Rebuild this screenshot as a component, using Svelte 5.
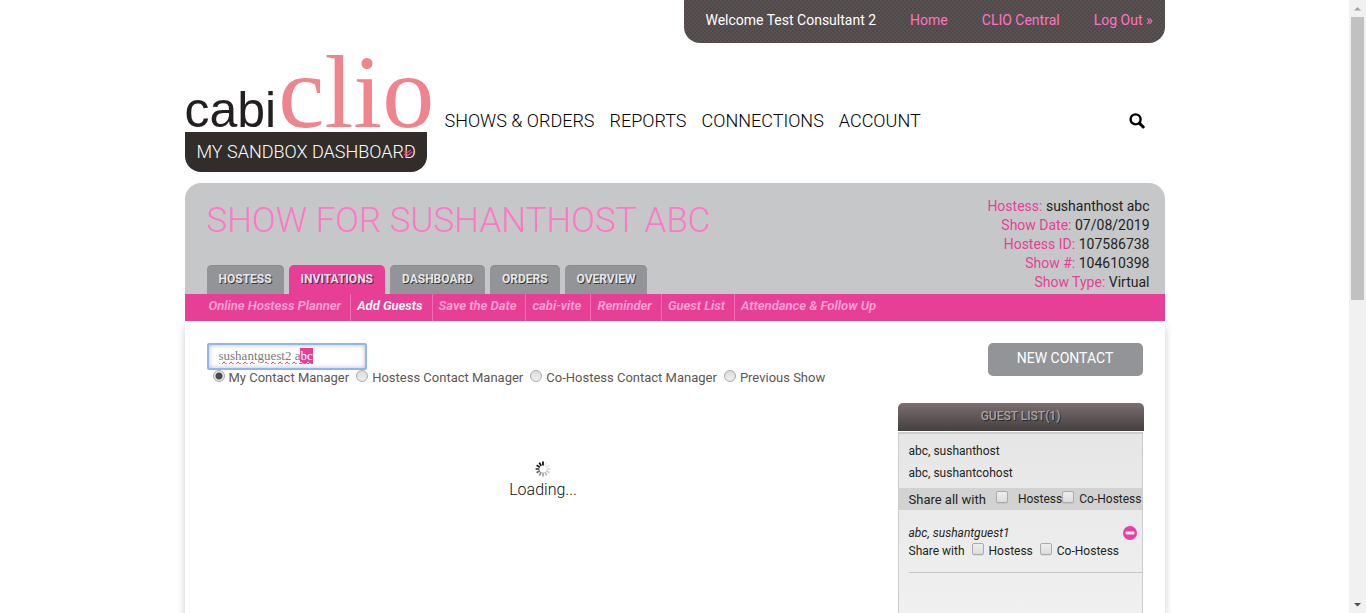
<script>
  import { onMount } from 'svelte';

  const menu = ['SHOWS & ORDERS', 'REPORTS', 'CONNECTIONS', 'ACCOUNT'];
  const tabs = ['HOSTESS', 'INVITATIONS', 'DASHBOARD', 'ORDERS', 'OVERVIEW'];
  const steps = ['Online Hostess Planner', 'Add Guests', 'Save the Date', 'cabi-vite', 'Reminder', 'Guest List', 'Attendance & Follow Up'];
  const details = [
    ['Hostess:', 'sushanthost abc'],
    ['Show Date:', '07/08/2019'],
    ['Hostess ID:', '107586738'],
    ['Show #:', '104610398'],
    ['Show Type:', 'Virtual']
  ];
  const sources = ['My Contact Manager', 'Hostess Contact Manager', 'Co-Hostess Contact Manager', 'Previous Show'];
  const spokes = [1, 0.08, 0.1, 0.14, 0.2, 0.28, 0.36, 0.46, 0.6, 0.75, 0.9, 1];

  let source = $state(sources[0]);
  let query = $state('sushantguest2 abc');
  let field;

  onMount(() => {
    field.focus();
    field.setSelectionRange(15, 17);
  });
</script>

<div class="window">
  <div class="page">
    <header>
      <a class="brand" href="#home">
        <span class="logo"><span class="cabi">cabi</span><span class="clio">clio</span></span>
        <span class="dash">MY SANDBOX DASHBOARD
          <svg class="pencil" width="10" height="10" viewBox="0 0 10 10" aria-hidden="true"><path d="M1 4l3-1M1 7l7-5M3 9l6-5" stroke="#e83f96" stroke-width="1.3" fill="none" /></svg>
        </span>
      </a>
      <div class="top">
        <div class="user">
          <span>Welcome Test Consultant 2</span>
          <a href="#home">Home</a>
          <a href="#central">CLIO Central</a>
          <a href="#logout">Log Out »</a>
        </div>
        <nav class="menu">
          {#each menu as m}<a href="#menu">{m}</a>{/each}
          <button class="search" aria-label="Search">
            <svg width="16" height="16" viewBox="0 0 16 16"><circle cx="6.6" cy="6.4" r="5" fill="none" stroke="#000" stroke-width="2.4" /><path d="M10.3 10.1L14.2 14" stroke="#000" stroke-width="3" stroke-linecap="round" /></svg>
          </button>
        </nav>
      </div>
    </header>

    <section class="show">
      <div class="title">
        <h1>SHOW FOR SUSHANTHOST ABC</h1>
        <nav class="tabs">
          {#each tabs as t, i}<a href="#tab" class:active={i === 1}>{t}</a>{/each}
        </nav>
      </div>
      <dl>
        {#each details as [k, v]}<div><dt>{k}</dt> <dd>{v}</dd></div>{/each}
      </dl>
    </section>
    <nav class="steps">
      {#each steps as s, i}<a href="#step" class:active={i === 1}>{s}</a>{/each}
    </nav>

    <main>
      <div class="finder">
        <input class="query" type="text" aria-label="Search contacts" spellcheck="false" bind:this={field} bind:value={query} />
        <div class="sources">
          {#each sources as s}
            <label><input type="radio" name="source" value={s} bind:group={source} />{s}</label>
          {/each}
        </div>
        <div class="loading" role="status">
          <svg width="16" height="16" viewBox="-8 -8 16 16" aria-hidden="true">
            {#each spokes as o, i}
              <path d="M0-3.6V-7.4" stroke="#000" stroke-width="1.7" opacity={o} transform="rotate({i * 30})" />
            {/each}
          </svg>
          <span>Loading...</span>
        </div>
      </div>
      <aside>
        <button class="new">NEW CONTACT</button>
        <h2>GUEST LIST(1)</h2>
        <div class="guests">
          <p>abc, sushanthost</p>
          <p>abc, sushantcohost</p>
          <div class="all">
            <span>Share all with</span>
            <label class="wide"><input type="checkbox" />Hostess</label>
            <label><input type="checkbox" />Co-Hostess</label>
          </div>
          <div class="guest">
            <div class="name">
              <em>abc, sushantguest1</em>
              <button class="remove" aria-label="Remove guest">
                <svg width="14" height="14" viewBox="0 0 14 14"><circle cx="7" cy="7" r="7" fill="#e83fa6" /><rect x="2.5" y="5.5" width="9" height="3" rx="1" fill="#fbe3f2" /></svg>
              </button>
            </div>
            <div class="share">
              <span>Share with</span>
              <label><input type="checkbox" />Hostess</label>
              <label><input type="checkbox" />Co-Hostess</label>
            </div>
          </div>
        </div>
      </aside>
    </main>
  </div>
  <div class="scroll" aria-hidden="true">
    <svg width="17" height="17"><path d="M5 10.5h7L8.5 7z" fill="#a3a3a3" /></svg>
    <span class="thumb"></span>
    <span class="track"></span>
    <svg width="17" height="17"><path d="M5 7h7l-3.500 3.500z" fill="#505050" /></svg>
  </div>
</div>

<style>
  :global(body) { margin: 0; background: #fff; }
  .window { display: flex; height: 100vh; overflow: hidden; font-family: Roboto, "Liberation Sans", sans-serif; color: #231f20; }
  .window * { box-sizing: border-box; }
  a { text-decoration: none; color: inherit; }
  button { font: inherit; border: 0; padding: 0; background: none; cursor: pointer; }
  .page { flex: 1; max-width: 980px; min-width: 0; margin: 0 auto; display: flex; flex-direction: column; }

  header { display: flex; justify-content: space-between; height: 183px; flex: none; }
  .brand { width: 242px; padding-top: 32px; flex: none; }
  .logo { display: flex; align-items: baseline; gap: 2px; height: 100px; line-height: 120px; white-space: nowrap; }
  .cabi { font-family: "Liberation Sans", sans-serif; font-size: 50px; color: #231f20; }
  .clio { font-family: "Liberation Serif", serif; font-size: 104px; color: #f0848d; }
  .dash { display: block; position: relative; height: 40px; padding-left: 12px; border-radius: 0 0 16px 16px; background: #322d2b; color: #fff; font-size: 18px; font-weight: 300; line-height: 40px; white-space: nowrap; }
  .pencil { position: absolute; right: 14px; top: 16px; }
  .top { flex: 1; display: flex; flex-direction: column; }
  .user { align-self: flex-end; display: flex; gap: 34px; height: 43px; padding: 0 12px 0 21px; border-radius: 0 0 16px 16px; line-height: 41px; font-size: 14px; color: #fff; background: repeating-conic-gradient(#504949 0 25%, #5a5252 0 50%) 0 0 / 4px 4px; white-space: nowrap; }
  .user a { color: #ff73c4; }
  .menu { display: flex; align-items: center; gap: 15px; padding: 0 20px 0 18px; margin-top: 65px; font-size: 18px; line-height: 26px; font-weight: 300; color: #000; white-space: nowrap; }
  .search { margin-left: auto; height: 16px; line-height: 0; }

  .show { display: flex; justify-content: space-between; height: 111px; flex: none; padding: 0 15px 0 22px; border-radius: 16px 16px 0 0; background: #c6c7c9; }
  .title { display: flex; flex-direction: column; justify-content: space-between; }
  h1 { margin: 17px 0 0; font-size: 35px; line-height: 42px; font-weight: 300; color: #ff78c5; white-space: nowrap; }
  .tabs { display: flex; gap: 5px; }
  .tabs a { padding: 0 12px; height: 29px; line-height: 28px; border-radius: 5px 5px 0 0; background: #939498; color: #e6e7e8; font-size: 12px; font-weight: 700; text-shadow: 1px 1px 0 #3b3536; box-shadow: inset 0 1px 0 #928a8b; }
  .tabs a.active { background: #e83f96; color: #f7d9ea; box-shadow: none; }
  dl { margin: 14px 0 0; font-size: 14px; line-height: 19px; text-align: right; white-space: nowrap; }
  dt, dd { display: inline; margin: 0; }
  dt { color: #e83f96; }
  .steps { display: flex; height: 27px; flex: none; padding-left: 18px; background: #e83f96; color: #ffa3d9; font-size: 13px; line-height: 24px; font-style: italic; font-weight: 600; white-space: nowrap; }
  .steps a { padding: 0 9px 0 6px; border-left: 1px solid #ee6fb4; }
  .steps a:first-child { border: 0; }
  .steps .active { color: #fff; }

  main { flex: 1; display: flex; gap: 18px; padding: 22px 21px 0 22px; box-shadow: 0 6px 8px #0003; clip-path: inset(0 -12px); background: #fff; }
  .finder { flex: 1; }
  .query { display: block; width: 160px; height: 27px; padding: 0 10px 2px; border: 2px solid #8fb5f5; border-radius: 2px; outline: 0; box-shadow: inset 0 0 5px #0004; color: #7b7b7b; font-family: "Liberation Serif", serif; font-size: 13px; text-decoration: underline wavy #e22 1px; }
  .query::selection { background: #e83f96; color: #fff; }
  .sources { display: flex; gap: 7px; padding-left: 6px; font-size: 13px; line-height: 16px; color: #5f5553; white-space: nowrap; }
  label { display: inline-flex; align-items: center; gap: 4px; }
  input[type="radio"] { appearance: none; width: 12px; height: 12px; margin: 0 0 4px; border: 1px solid #aaa; border-radius: 50%; background: linear-gradient(#ddd, #eee); }
  input[type="radio"]:checked { background: radial-gradient(#4a4a4a 0 3px, #e8e8e8 4px); }
  .loading { display: flex; flex-direction: column; align-items: center; gap: 3px; margin-top: 75px; font-size: 16px; line-height: 20px; font-weight: 300; color: #111; }

  aside { width: 246px; flex: none; display: flex; flex-direction: column; }
  .new { align-self: flex-end; width: 155px; height: 33px; margin-right: 1px; border-radius: 5px; background: #939498; color: #fff; font-size: 14px; line-height: 30px; padding-bottom: 3px; }
  h2 { margin: 27px 0 1px; height: 28px; border-radius: 5px 5px 0 0; background: linear-gradient(#7b6f70, #453e3f); color: #aaa2a1; font-size: 12px; line-height: 26px; font-weight: 500; text-align: center; text-shadow: 1px 1px 0 #2d2829; }
  .guests { flex: 1; margin-right: 1px; padding-top: 6px; border: 1px solid #ccc; border-top-width: 2px; border-bottom: 0; background: linear-gradient(#e6e6e6, #f0f0f0); font-size: 12px; white-space: nowrap; }
  p { margin: 0; padding-left: 10px; line-height: 22px; }
  .all { display: flex; align-items: center; height: 22px; margin-top: 4px; padding-left: 10px; background: #d2d2d2; }
  .all > span { width: 88px; font-size: 13px; }
  .all label { gap: 5px; }
  .all .wide { gap: 10px; }
  input[type="checkbox"] { appearance: none; width: 12px; height: 12px; margin: 0 0 4px; border: 1px solid #aaa; border-radius: 2px; background: linear-gradient(#eee, #ddd); box-shadow: 0 1px 0 #0001; }
  .guest { margin: 14px 0 0 10px; height: 49px; border-bottom: 1px solid #c6c6c6; }
  .name { display: flex; justify-content: space-between; align-items: center; padding-right: 5px; line-height: 18px; }
  .remove { height: 14px; line-height: 0; }
  .share { display: flex; gap: 7px; line-height: 18px; }
  .share label { gap: 5px; }

  .scroll { width: 17px; flex: none; display: flex; flex-direction: column; align-items: center; background: #f1f1f1; }
  .thumb { width: 13px; flex: 283; background: #c1c1c1; }
  .track { flex: 296; }
</style>
